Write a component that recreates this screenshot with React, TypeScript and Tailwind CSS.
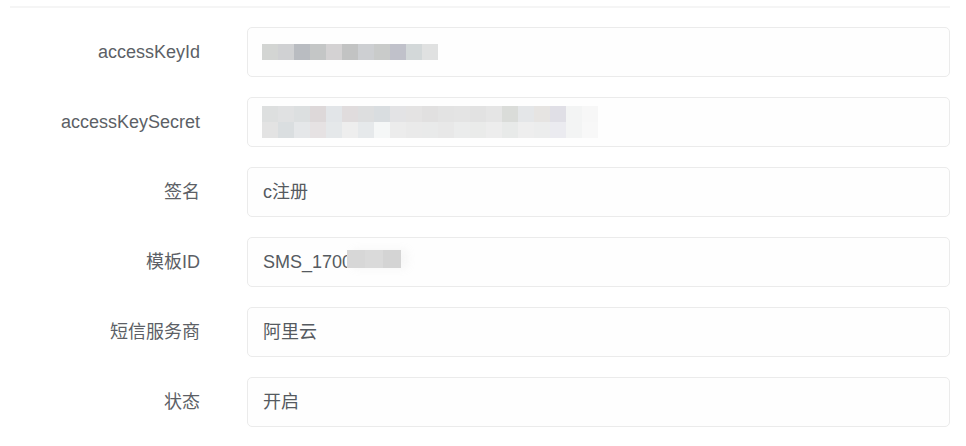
import React from "react";

// mosaic colours sampled from the blurred secrets
const keyIdBlocks = [
  "#d3d5d3", "#d0d1d3", "#b9bcc1", "#c4c6c6", "#d4d2d3", "#c2c3c3",
  "#cdcfd2", "#c9cbca", "#c0c1ca", "#d3d8d9", "#e0e1e1",
];

const secretTop = [
  "#dddfdf", "#e0e1e2", "#dcdfe0", "#ddd8d9", "#e2e5e8", "#e0dcdd",
  "#dddedf", "#d9dde0", "#e3e3e5", "#e4e3e3", "#e1e0e0", "#e3e3e3",
  "#e4e4e4", "#e2e2e2", "#e5e5e5", "#dadcd9", "#e4e6e8", "#e6e4e2",
  "#e0dfe6", "#f3f4f4", "#f7f7f7",
];

const secretBottom = [
  "#e3e3e3", "#dadee0", "#e5e7e9", "#e6e2e3", "#e5e8ea", "#eeeeee",
  "#e6e9eb", "#f5f7f7", "#ececec", "#eaeaea", "#e9eaea", "#e8e8e8",
  "#ebecec", "#eaebea", "#ededed", "#e8eae9", "#eeeeee", "#eceded",
  "#ebebf0", "#f3f4f4", "#f8f8f8",
];

const tplBlocks = ["#d7d7d7", "#dadada", "#d4d4d4"];

function Mosaic({ rows }: { rows: string[][] }) {
  return (
    <div className="flex flex-col">
      {rows.map((row, i) => (
        <div key={i} className="flex">
          {row.map((c, j) => (
            <div key={j} className="w-[16px] h-[16px]" style={{ background: c }} />
          ))}
        </div>
      ))}
    </div>
  );
}

function Row({ label, children }: { label: string; children: React.ReactNode }) {
  return (
    <div className="flex items-center h-[50px]">
      <div className="w-[190px] text-right text-[18px] text-[#5c5f66]">{label}</div>
      <div className="ml-[47px] flex-1 h-full flex items-center px-[15px] border border-[#ebebeb] rounded-[5px] bg-[#fefefe] text-[18px] text-[#555a60]">
        {children}
      </div>
    </div>
  );
}

export default function App() {
  return (
    <main
      className="w-[966px] h-[446px] bg-white overflow-hidden"
      style={{ fontFamily: '"Liberation Sans", "Noto Sans CJK SC", sans-serif' }}
    >
      <div className="pl-[10px] pr-[16px] pt-[6px]">
        <div className="h-[2px] bg-[#f5f5f5]" />
        <div className="mt-[19px] flex flex-col gap-[20px]">
          <Row label="accessKeyId">
            <div className="ml-[-1px]">
              <Mosaic rows={[keyIdBlocks]} />
            </div>
          </Row>
          <Row label="accessKeySecret">
            <div className="ml-[-1px]">
              <Mosaic rows={[secretTop, secretBottom]} />
            </div>
          </Row>
          <Row label="签名">c注册</Row>
          <Row label="模板ID">
            <span>SMS_1700</span>
            {/* blurred tail of the template id, laid over the last digit */}
            <div className="relative -ml-[5px] flex h-[18px] -mt-[6px] bg-white shadow-[6px_0_8px_rgba(245,245,245,0.9)]">
              {tplBlocks.map((c, i) => (
                <div key={i} className="w-[18px] h-[18px]" style={{ background: c }} />
              ))}
            </div>
          </Row>
          <Row label="短信服务商">阿里云</Row>
          <Row label="状态">开启</Row>
        </div>
      </div>
    </main>
  );
}
